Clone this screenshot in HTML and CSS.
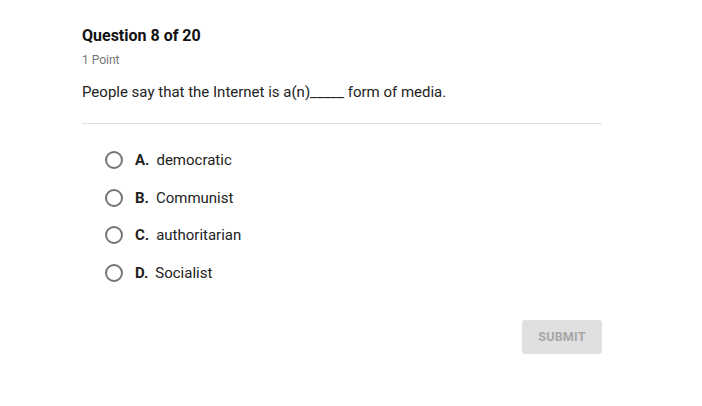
FILE: index.html
```html
<!DOCTYPE html>
<html>
<head>
<meta charset="utf-8">
<link rel="stylesheet" href="styles.css">
</head>
<body>
<div class="page">
  <div class="header">
    <h1 class="title">Question 8 of 20</h1>
    <div class="points">1 Point</div>
    <p class="prompt">People say that the Internet is a(n)_____ form of media.</p>
  </div>
  <ul class="options">
    <li class="option"><span class="radio"></span><span class="letter">A.</span><span class="answer">democratic</span></li>
    <li class="option"><span class="radio"></span><span class="letter">B.</span><span class="answer">Communist</span></li>
    <li class="option"><span class="radio"></span><span class="letter">C.</span><span class="answer">authoritarian</span></li>
    <li class="option"><span class="radio"></span><span class="letter">D.</span><span class="answer">Socialist</span></li>
  </ul>
  <div class="actions">
    <button class="submit">SUBMIT</button>
  </div>
</div>
</body>
</html>
```

FILE: styles.css
```css
html, body {
  margin: 0;
  padding: 0;
  background: #ffffff;
}
body {
  font-family: Roboto, "Liberation Sans", Arial, sans-serif;
  color: #212121;
}
.page {
  width: 520px;
  padding: 25px 0 0 82px;
}
.header {
  border-bottom: 1px solid #e0e0e0;
  padding-bottom: 21px;
}
.title {
  margin: 0;
  font-size: 16px;
  font-weight: 700;
  line-height: 22px;
  color: #111111;
}
.points {
  margin-top: 5px;
  font-size: 12px;
  line-height: 16px;
  color: #757575;
}
.prompt {
  margin: 14px 0 0 0;
  font-size: 15px;
  line-height: 20px;
  color: #222222;
}
.options {
  list-style: none;
  margin: 0;
  padding: 26px 0 0 23px;
  display: flex;
  flex-direction: column;
  gap: 17.5px;
}
.option {
  display: flex;
  align-items: center;
  height: 20px;
  font-size: 15px;
}
.radio {
  box-sizing: border-box;
  width: 18px;
  height: 18px;
  border: 2px solid #757575;
  border-radius: 50%;
  margin-right: 12px;
  flex: none;
}
.letter {
  font-weight: 700;
  margin-right: 7px;
  color: #212121;
}
.answer {
  color: #222222;
}
.actions {
  display: flex;
  justify-content: flex-end;
  margin-top: 37px;
}
.submit {
  width: 80px;
  height: 34px;
  border: none;
  border-radius: 3px;
  background: #e0e0e0;
  color: #a6a6a6;
  font-family: Roboto, "Liberation Sans", Arial, sans-serif;
  font-size: 12.5px;
  font-weight: 700;
  letter-spacing: 0.2px;
  padding: 0;
}
```
